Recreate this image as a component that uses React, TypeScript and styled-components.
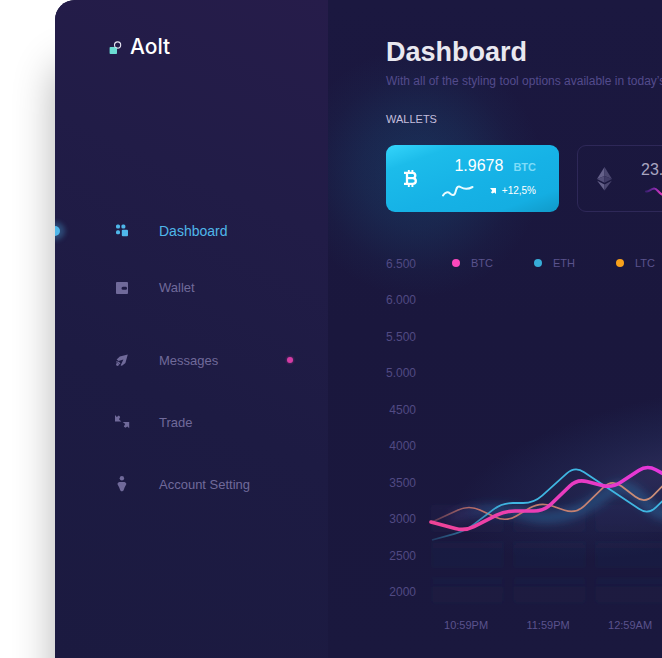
import React from "react";
import styled, { createGlobalStyle, css } from "styled-components";

const GlobalStyle = createGlobalStyle`
  * { box-sizing: border-box; }
  body {
    margin: 0;
    background: #ffffff;
    font-family: "Liberation Sans", Arial, sans-serif;
    overflow-x: hidden;
  }
`;

const Page = styled.div`
  padding-left: 55px;
  min-height: 100vh;
  display: flex;
  overflow: hidden;
`;

const AppWindow = styled.div`
  flex: 1;
  min-width: 0;
  display: flex;
  border-top-left-radius: 20px;
  background: #1a173e;
  box-shadow: 0 64px 42px rgba(0, 0, 0, 0.3);
`;

const Sidebar = styled.aside`
  flex: 0 0 273px;
  border-top-left-radius: 20px;
  background: linear-gradient(205deg, #261c4a 0%, #211c47 30%, #1d1b43 60%, #1b1a40 100%);
`;

const Brand = styled.a`
  display: flex;
  align-items: center;
  gap: 8px;
  padding: 34px 0 0 54px;
  color: #ffffff;
  font-family: Inter, "Liberation Sans", sans-serif;
  font-size: 21px;
  font-weight: 500;
  line-height: 26px;
  text-decoration: none;
`;

const Nav = styled.nav`
  display: flex;
  flex-direction: column;
  gap: 13px;
  margin-top: 142px;
`;

const NavGroup = styled.ul<{ $row: number }>`
  display: grid;
  grid-auto-rows: ${(p) => p.$row}px;
  margin: 0;
  padding: 0;
  list-style: none;
`;

const NavLink = styled.a<{ $active?: boolean }>`
  position: relative;
  display: flex;
  align-items: center;
  height: 100%;
  padding: 0 35px 0 60px;
  gap: 30px;
  color: ${(p) => (p.$active ? "#4fb7ea" : "#706a9a")};
  font-size: ${(p) => (p.$active ? 14 : 13)}px;
  text-decoration: none;

  svg {
    flex: none;
    overflow: visible;
  }

  ${(p) =>
    p.$active &&
    css`
      &::before {
        content: "";
        position: absolute;
        left: 0;
        width: 5px;
        height: 10px;
        border-radius: 0 5px 5px 0;
        background: #4fb7ea;
        box-shadow: 1px 0 5px 4px rgba(79, 183, 234, 0.3);
        clip-path: inset(-14px -14px -14px 0);
      }
    `}
`;

const UnreadDot = styled.span`
  width: 6px;
  height: 6px;
  margin-left: auto;
  border-radius: 50%;
  background: #d43ca4;
  box-shadow: 0 0 3px rgba(212, 60, 164, 0.6);
`;

const Main = styled.main`
  flex: 1;
  min-width: 0;
  overflow: hidden;
  padding: 35px 0 24px 58px;
  background:
    radial-gradient(
      circle 125px at 90px 172px,
      rgba(24, 130, 175, 0.24),
      rgba(24, 130, 175, 0.14) 45%,
      rgba(24, 130, 175, 0.04) 78%,
      rgba(24, 130, 175, 0) 100%
    ),
    linear-gradient(180deg, #1b1840 0%, #1a173d 50%, #1a183e 100%);
`;

const Title = styled.h1`
  margin: 0;
  color: #e9e8f0;
  font-size: 27px;
  line-height: 34px;
`;

const Subtitle = styled.p`
  margin: 4px 0 0;
  color: #534b8c;
  font-size: 12px;
  line-height: 16px;
  white-space: nowrap;
`;

const SectionTitle = styled.h2`
  margin: 22px 0 0;
  color: #c4bedd;
  font-size: 11px;
  font-weight: 400;
  line-height: 16px;
`;

const Wallets = styled.div`
  display: flex;
  gap: 18px;
  margin-top: 18px;
`;

const WalletCard = styled.button<{ $active?: boolean }>`
  flex: 0 0 173px;
  display: flex;
  align-items: center;
  height: 67px;
  padding: 0 22px 0 17px;
  border: 1px solid ${(p) => (p.$active ? "transparent" : "#2e2858")};
  border-radius: 9px;
  color: ${(p) => (p.$active ? "#ffffff" : "#a9a5c0")};
  font-family: inherit;
  text-align: left;
  background: ${(p) =>
    p.$active
      ? "linear-gradient(160deg, #35d5fb 0%, #1cbcea 20%, #16b2e6 55%, #14aee2 82%, #1099c8 100%) border-box"
      : "transparent"};
`;

const WalletBody = styled.span<{ $end?: boolean }>`
  display: flex;
  flex-direction: column;
  gap: 4px;
  ${(p) =>
    p.$end
      ? css`
          margin-left: auto;
          align-items: flex-end;
        `
      : css`
          margin-left: 29px;
        `}
`;

const AmountRow = styled.span`
  display: flex;
  align-items: baseline;
  gap: 10px;
  font-size: 16px;
  line-height: 20px;
`;

const Ticker = styled.span`
  color: #7fdcf8;
  font-size: 11px;
  font-weight: 700;
`;

const TrendRow = styled.span`
  display: flex;
  align-items: center;
  font-size: 10px;
  line-height: 20px;
  gap: 6px;
`;

const ArrowMark = styled.svg`
  margin-left: 10px;
`;

const Chart = styled.section`
  display: flex;
  margin-top: 45px;
`;

const YAxis = styled.ol`
  flex: none;
  display: flex;
  flex-direction: column;
  justify-content: space-between;
  height: 342px;
  margin: 0;
  padding: 0;
  list-style: none;
  text-align: right;
  color: #514a83;
  font-size: 12px;
  line-height: 14px;
`;

const PlotArea = styled.div`
  flex: 1;
  min-width: 0;
`;

const Legend = styled.ul`
  display: flex;
  gap: 41px;
  margin: 0;
  padding: 0 0 0 36px;
  list-style: none;
  color: #5a538d;
  font-size: 11px;
  line-height: 12px;
`;

const LegendItem = styled.li<{ $color: string }>`
  display: flex;
  align-items: center;
  gap: 11px;

  &::before {
    content: "";
    width: 8px;
    height: 8px;
    border-radius: 50%;
    background: ${(p) => p.$color};
  }
`;

const Plot = styled.svg`
  display: block;
  width: 100%;
  height: 349px;
`;

const XAxis = styled.ol`
  display: flex;
  margin: 0;
  padding: 0 0 0 9px;
  list-style: none;
  color: #5a538d;
  font-size: 11px;
  line-height: 14px;

  li {
    flex: 0 0 82px;
    text-align: center;
  }
`;

type Point = [number, number];

/* Straight segments joined by cubic corners of the given reach. */
function roundedPath(points: Point[], reach: number): string {
  const toward = (from: Point, to: Point, distance: number): Point => {
    const length = Math.hypot(to[0] - from[0], to[1] - from[1]);
    const t = Math.min(distance, length / 2) / length;
    return [from[0] + (to[0] - from[0]) * t, from[1] + (to[1] - from[1]) * t];
  };
  let d = `M${points[0].join(" ")}`;
  for (let i = 1; i < points.length - 1; i++) {
    const start = toward(points[i], points[i - 1], reach);
    const end = toward(points[i], points[i + 1], reach);
    const c1 = toward(points[i], points[i - 1], reach / 3);
    const c2 = toward(points[i], points[i + 1], reach / 3);
    d += `L${start.join(" ")}C${c1.join(" ")} ${c2.join(" ")} ${end.join(" ")}`;
  }
  return `${d}L${points[points.length - 1].join(" ")}`;
}

const btcLine: Point[] = [[15, 253], [49, 262], [89, 242], [128, 242], [161, 210], [196, 219], [231, 196], [266, 215]];
const ethLine: Point[] = [[16, 271], [49, 262], [86, 234], [118, 234], [159, 197], [232, 246], [266, 213]];
const ltcLine: Point[] = [[16, 253], [53, 236], [90, 253], [124, 233], [160, 245], [196, 210], [229, 235], [266, 197]];

const tileRows = [236, 272, 308];
const tileColumns = [15, 97, 179];

const LogoMark = () => (
  <svg width="13" height="14" viewBox="0 0 13 14" aria-hidden="true">
    <rect x="0.6" y="7" width="7.4" height="7" rx="0.8" fill="#6bdcd3" />
    <circle cx="8.6" cy="5" r="3.1" fill="none" stroke="#e6e4f2" strokeWidth="1.1" />
  </svg>
);

const DashboardIcon = () => (
  <svg width="14" height="14" viewBox="0 0 14 14" fill="currentColor" aria-hidden="true">
    <rect x="1" y="0.4" width="4" height="4" rx="1.5" />
    <rect x="6.4" y="0.4" width="4" height="4" rx="1.5" />
    <rect x="1" y="6.2" width="4" height="4" rx="1.5" />
    <rect x="6.8" y="5.8" width="6.2" height="6.4" rx="1" />
  </svg>
);

const WalletIcon = () => (
  <svg width="14" height="14" viewBox="0 0 14 14" fill="currentColor" aria-hidden="true">
    <path
      fillRule="evenodd"
      d="M2.200 1h9.600c.8 0 1.200.4 1.200 1.200v9.600c0 .8-.4 1.200-1.200 1.200H2.200C1.400 13 1 12.600 1 11.800V2.200C1 1.400 1.400 1 2.200 1ZM8 5.700a1.500 1.500 0 0 0 0 3h2.400c1 0 1.600-.5 1.600-1.500s-.6-1.500-1.600-1.500Z"
    />
  </svg>
);

const MessagesIcon = () => (
  <svg width="14" height="14" viewBox="0 0 14 14" fill="currentColor" aria-hidden="true">
    <path d="M12.800 1.400 10.400 10 7 12.800 5.600 12.400 8.400 6.600 3.600 8 1.600 6.400 4.800 3.600Z" />
    <path d="M1.200 8.300C3 8.300 4.600 9 5.400 10.600L4.500 11.400C3.800 10.200 2.800 9.600 1.200 9.600Z" />
    <circle cx="2.500" cy="11.500" r="1.400" />
  </svg>
);

const TradeIcon = () => (
  <svg width="14" height="14" viewBox="0 0 14 14" fill="currentColor" aria-hidden="true">
    <path d="M0 0 1.800 1.900 3.800 .5 5.200 1.900 4 4.300 6.300 6.400H0Z" />
    <path d="M7.700 7H14.200V13.200L12.400 11.400 10.400 12.800 8.800 11.400 10.200 9Z" />
  </svg>
);

const AccountIcon = () => (
  <svg width="14" height="16" viewBox="0 0 14 16" fill="currentColor" aria-hidden="true">
    <circle cx="6.900" cy="2.200" r="2.200" />
    <path d="M4.400 6h5c1 .3 1.600 1 2 2.100L9.600 11.400 8.500 14.400 6.900 15.600 5.300 14.400 4.200 11.400 2.400 8.100C2.800 7 3.400 6.300 4.400 6Z" />
  </svg>
);

const BitcoinMark = () => (
  <svg width="14" height="19" viewBox="0 0 14 19" fill="none" stroke="#ffffff" aria-hidden="true">
    <path
      d="M0 3.900H8.600C12.200 3.900 12.200 9.200 8.600 9.200H4M8.600 9.200C12.900 9.200 12.900 14.800 8.600 14.800H0M3 4V15"
      strokeWidth="2.300"
    />
    <path d="M4.800 1V4M8.400 1V4M4.800 15V18M8.400 15V18" strokeWidth="1.900" />
  </svg>
);

const EthereumMark = () => (
  <svg width="17" height="24" viewBox="0 0 17 24" aria-hidden="true">
    <path d="M9.500 0 2 12 9.500 9Z" fill="#65618a" />
    <path d="M9.500 0 17 12 9.500 9Z" fill="#4b4770" />
    <path d="M2 12 9.500 9V15.800Z" fill="#524e78" />
    <path d="M17 12 9.500 9V15.800Z" fill="#3f3b66" />
    <path d="M2.200 13.800 9.500 17.600V23.400Z" fill="#65618a" />
    <path d="M16.800 13.800 9.500 17.600V23.400Z" fill="#4b4770" />
  </svg>
);

const axisValues = ["6.500", "6.000", "5.500", "5.000", "4500", "4000", "3500", "3000", "2500", "2000"];

export default function App() {
  return (
    <>
      <GlobalStyle />
      <Page>
        <AppWindow>
          <Sidebar>
            <Brand href="#">
              <LogoMark />
              Aolt
            </Brand>
            <Nav aria-label="Main">
              <NavGroup $row={57}>
                <li>
                  <NavLink href="#dashboard" $active aria-current="page">
                    <DashboardIcon />
                    Dashboard
                  </NavLink>
                </li>
                <li>
                  <NavLink href="#wallet">
                    <WalletIcon />
                    Wallet
                  </NavLink>
                </li>
              </NavGroup>
              <NavGroup $row={62}>
                <li>
                  <NavLink href="#messages">
                    <MessagesIcon />
                    Messages
                    <UnreadDot />
                  </NavLink>
                </li>
                <li>
                  <NavLink href="#trade">
                    <TradeIcon />
                    Trade
                  </NavLink>
                </li>
                <li>
                  <NavLink href="#account">
                    <AccountIcon />
                    Account Setting
                  </NavLink>
                </li>
              </NavGroup>
            </Nav>
          </Sidebar>
          <Main>
            <Title>Dashboard</Title>
            <Subtitle>With all of the styling tool options available in today’s</Subtitle>
            <SectionTitle>WALLETS</SectionTitle>
            <Wallets>
              <WalletCard type="button" $active>
                <BitcoinMark />
                <WalletBody $end>
                  <AmountRow>
                    1.9678
                    <Ticker>BTC</Ticker>
                  </AmountRow>
                  <TrendRow>
                    <svg width="32" height="14" viewBox="0 0 32 14" fill="none" aria-hidden="true">
                      <path
                        d="M1 11.500C3 8 6 7.500 8 9.500S12.500 12 13.500 8 15 2.500 17 2.500 22 7.500 30.500 3"
                        stroke="#e9fbff"
                        strokeWidth="2"
                        strokeLinecap="round"
                      />
                    </svg>
                    <ArrowMark width="6" height="6" viewBox="0 0 6 6" fill="#ffffff" aria-hidden="true">
                      <path d="M0 0H6V6L4.500 4.500 2.300 5.600 1 4.500 2.200 2.400Z" />
                    </ArrowMark>
                    +12,5%
                  </TrendRow>
                </WalletBody>
              </WalletCard>
              <WalletCard type="button">
                <EthereumMark />
                <WalletBody>
                  <AmountRow>23.</AmountRow>
                  <TrendRow>
                    <svg width="40" height="14" viewBox="0 0 40 14" fill="none" aria-hidden="true">
                      <defs>
                        <linearGradient id="ethTrend" x1="4" y1="0" x2="24" y2="0" gradientUnits="userSpaceOnUse">
                          <stop offset="0" stopColor="#55259a" stopOpacity="0.5" />
                          <stop offset="0.5" stopColor="#8a2bb0" />
                          <stop offset="0.8" stopColor="#d636b8" />
                        </linearGradient>
                      </defs>
                      <path
                        d="M5 7.500C8 8 9 5 13 4.500 16 4.200 17 8.500 21 10.500"
                        stroke="url(#ethTrend)"
                        strokeWidth="2"
                        strokeLinecap="round"
                      />
                    </svg>
                  </TrendRow>
                </WalletBody>
              </WalletCard>
            </Wallets>
            <Chart aria-label="Price history">
              <YAxis>
                {axisValues.map((value) => (
                  <li key={value}>{value}</li>
                ))}
              </YAxis>
              <PlotArea>
                <Legend>
                  <LegendItem $color="#fb48bd">BTC</LegendItem>
                  <LegendItem $color="#37add8">ETH</LegendItem>
                  <LegendItem $color="#f9a11b">LTC</LegendItem>
                </Legend>
                <Plot role="img" aria-label="BTC, ETH and LTC prices">
                  <defs>
                    <linearGradient id="btc" x1="14" y1="0" x2="246" y2="0" gradientUnits="userSpaceOnUse">
                      <stop offset="0" stopColor="#ef4496" />
                      <stop offset="1" stopColor="#e436dc" />
                    </linearGradient>
                    <linearGradient id="eth" x1="14" y1="0" x2="90" y2="0" gradientUnits="userSpaceOnUse">
                      <stop offset="0" stopColor="#3fb6e2" stopOpacity="0.2" />
                      <stop offset="1" stopColor="#3fb6e2" />
                    </linearGradient>
                    <linearGradient id="ltc" x1="14" y1="0" x2="246" y2="0" gradientUnits="userSpaceOnUse">
                      <stop offset="0" stopColor="#c0706c" stopOpacity="0.3" />
                      <stop offset="0.2" stopColor="#bd7068" />
                      <stop offset="1" stopColor="#cb8f78" />
                    </linearGradient>
                    <radialGradient
                      id="haze"
                      cx="0"
                      cy="0"
                      r="1"
                      gradientUnits="userSpaceOnUse"
                      gradientTransform="translate(252 204) rotate(-12) scale(220 76)"
                    >
                      <stop offset="0" stopColor="#45457a" stopOpacity="0.42" />
                      <stop offset="0.5" stopColor="#354a80" stopOpacity="0.19" />
                      <stop offset="1" stopColor="#2a4a80" stopOpacity="0" />
                    </radialGradient>
                    <linearGradient id="glow" x1="32" y1="0" x2="120" y2="0" gradientUnits="userSpaceOnUse">
                      <stop offset="0" stopColor="#5a3f8f" stopOpacity="0.4" />
                      <stop offset="0.4" stopColor="#2f5a96" />
                      <stop offset="1" stopColor="#2f76ac" />
                    </linearGradient>
                    <filter id="soft" x="-20%" y="-100%" width="140%" height="300%">
                      <feGaussianBlur stdDeviation="5" />
                    </filter>
                    <filter id="tileSoft" x="-10%" y="-10%" width="120%" height="120%">
                      <feGaussianBlur stdDeviation="1.500" />
                    </filter>
                    <linearGradient id="tile" x1="0" y1="230" x2="0" y2="336" gradientUnits="userSpaceOnUse">
                      <stop offset="0" stopColor="#2d4a78" stopOpacity="0.09" />
                      <stop offset="1" stopColor="#2d3468" stopOpacity="0.05" />
                    </linearGradient>
                  </defs>
                  <rect x="0" y="90" width="100%" height="240" fill="url(#haze)" />
                  <g fill="url(#tile)" filter="url(#tileSoft)">
                    {tileRows.map((y) =>
                      tileColumns.map((x) => <rect key={`${x}-${y}`} x={x} y={y} width="73" height="27" rx="2" />)
                    )}
                  </g>
                  <path
                    d="M33 250C61 237 91 240 111 246S161 248 187 227 221 228 237 240 261 240 267 234"
                    fill="none"
                    stroke="url(#glow)"
                    strokeOpacity="0.45"
                    strokeWidth="11"
                    filter="url(#soft)"
                  />
                  <path d={roundedPath(ltcLine, 12)} fill="none" stroke="url(#ltc)" strokeWidth="1.700" />
                  <path d={roundedPath(ethLine, 11)} fill="none" stroke="url(#eth)" strokeWidth="1.800" />
                  <path d={roundedPath(btcLine, 10)} fill="none" stroke="url(#btc)" strokeWidth="3.600" strokeLinecap="round" />
                </Plot>
                <XAxis>
                  <li>10:59PM</li>
                  <li>11:59PM</li>
                  <li>12:59AM</li>
                </XAxis>
              </PlotArea>
            </Chart>
          </Main>
        </AppWindow>
      </Page>
    </>
  );
}
